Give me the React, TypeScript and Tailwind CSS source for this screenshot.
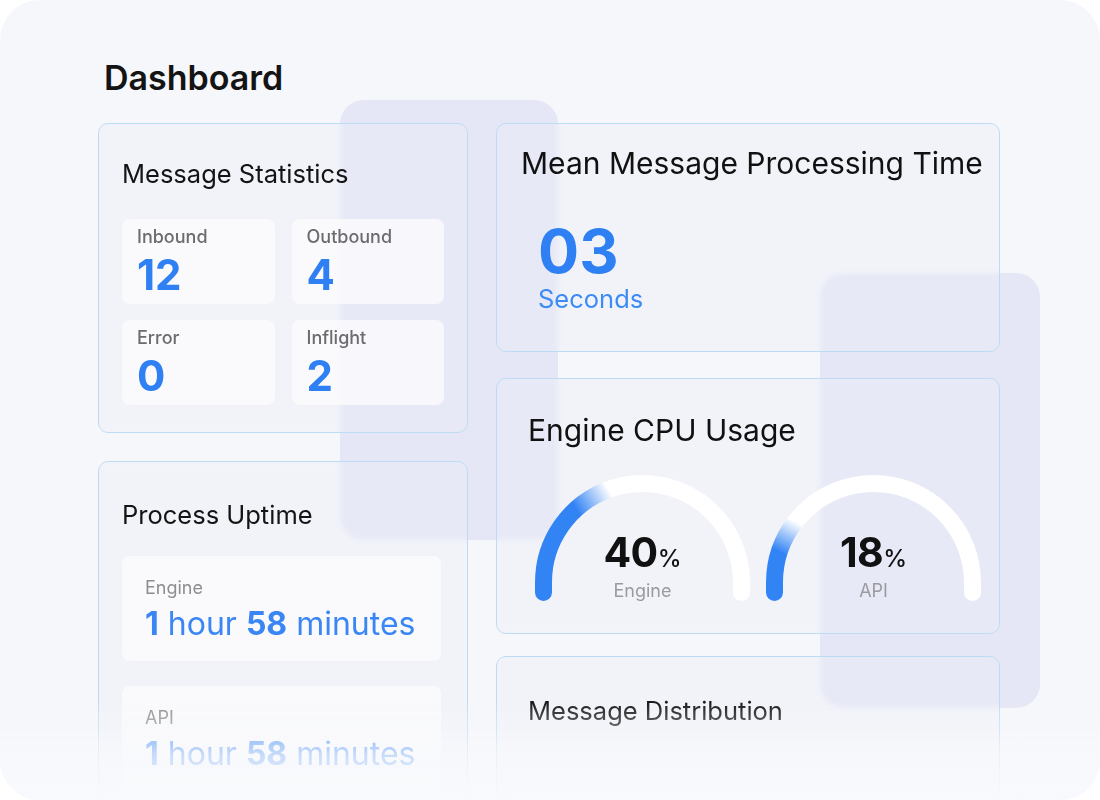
import React from "react";

const cx = 107.5;
const cy = 107.5;
const r = 99;

function pt(deg: number) {
  const a = (deg * Math.PI) / 180;
  return { x: cx + r * Math.cos(a), y: cy - r * Math.sin(a) };
}

function Gauge({
  id,
  end,
  fade,
  value,
  label,
}: {
  id: string;
  end: number;
  fade: number;
  value: string;
  label: string;
}) {
  const e = pt(end);
  const f = pt(fade);
  const track = `M ${cx - r} ${cy + 10} L ${cx - r} ${cy} A ${r} ${r} 0 0 1 ${cx + r} ${cy} L ${cx + r} ${cy + 10}`;
  const fill = `M ${cx - r} ${cy + 10} L ${cx - r} ${cy} A ${r} ${r} 0 0 1 ${e.x} ${e.y}`;
  return (
    <div className="relative w-[215px] h-[127px]">
      <svg width="215" height="127" viewBox="0 0 215 127">
        <defs>
          <linearGradient id={id} gradientUnits="userSpaceOnUse" x1={f.x} y1={f.y} x2={e.x} y2={e.y}>
            <stop offset="0" stopColor="#3283f4" stopOpacity="1" />
            <stop offset="1" stopColor="#3283f4" stopOpacity="0" />
          </linearGradient>
        </defs>
        <path d={track} fill="none" stroke="#ffffff" strokeWidth="17" strokeLinecap="round" />
        <path d={fill} fill="none" stroke={`url(#${id})`} strokeWidth="17" strokeLinecap="round" />
      </svg>
      <div className="absolute inset-x-0 top-[57px] flex flex-col items-center">
        <div className="leading-[40px] text-[#111]">
          <span className="text-[41px] font-bold tracking-[-0.5px]">{value}</span>
          <span className="text-[24px] font-medium">%</span>
        </div>
        <div className="text-[18px] leading-[20px] text-[#9a9a9f]">{label}</div>
      </div>
    </div>
  );
}

function Card({ className, children }: { className?: string; children: React.ReactNode }) {
  return (
    <div
      className={
        "rounded-[10px] border-[1.5px] border-[#bddcf3] bg-[#eceef7]/40 backdrop-blur-[2px] " +
        (className ?? "")
      }
    >
      {children}
    </div>
  );
}

function Stat({ label, value }: { label: string; value: string }) {
  return (
    <div className="h-[85px] rounded-[8px] bg-[#fafafc]/85 px-[15px] pt-[8px]">
      <div className="text-[18px] leading-[20px] font-medium text-[#6b6b70]">{label}</div>
      <div className="mt-[8px] text-[42px] leading-[40px] font-bold text-[#2f80f2]">{value}</div>
    </div>
  );
}

function Uptime({ label }: { label: string }) {
  return (
    <div className="h-[105px] rounded-[8px] bg-[#fafafc]/85 px-[23px] pt-[21px]">
      <div className="text-[18px] leading-[22px] text-[#8d8d92]">{label}</div>
      <div className="mt-[6px] text-[32px] leading-[38px] text-[#3a86f5]">
        <span className="font-bold">1</span> hour <span className="font-bold">58</span> minutes
      </div>
    </div>
  );
}

export default function App() {
  return (
    <div className="w-[1100px] h-[800px] bg-white font-['Inter',sans-serif]">
      <div className="relative w-full h-full rounded-[40px] bg-[#f6f7fb] overflow-hidden">
        <div className="absolute left-[340px] top-[100px] w-[218px] h-[440px] rounded-[24px] bg-[#e6e7f6]" />
        <div className="absolute left-[820px] top-[273px] w-[220px] h-[435px] rounded-[24px] bg-[#e6e7f6]" />

        <div className="relative pl-[98px] pt-[58px]">
          <h1 className="ml-[6px] text-[34px] leading-[40px] font-semibold text-[#141414]">Dashboard</h1>
          <div className="mt-[25px] flex gap-[28px]">
            <div className="w-[370px] flex flex-col gap-[28px]">
              <Card className="h-[310px] px-[23px] pt-[34px]">
                <h2 className="text-[25.5px] leading-[32px] text-[#141414]">Message Statistics</h2>
                <div className="mt-[29px] grid grid-cols-2 gap-x-[17px] gap-y-[16px]">
                  <Stat label="Inbound" value="12" />
                  <Stat label="Outbound" value="4" />
                  <Stat label="Error" value="0" />
                  <Stat label="Inflight" value="2" />
                </div>
              </Card>
              <Card className="h-[400px] pl-[23px] pr-[26px] pt-[37px]">
                <h2 className="text-[25.5px] leading-[32px] text-[#141414]">Process Uptime</h2>
                <div className="mt-[25px] flex flex-col gap-[25px]">
                  <Uptime label="Engine" />
                  <Uptime label="API" />
                </div>
              </Card>
            </div>

            <div className="w-[504px] flex flex-col">
              <Card className="h-[229px] pl-[24px] pt-[21px]">
                <h2 className="text-[30px] leading-[36px] text-[#111]">Mean Message Processing Time</h2>
                <div className="ml-[17px] mt-[40px] text-[61px] leading-[61px] font-bold text-[#2f80f2]">03</div>
                <div className="ml-[17px] mt-[2px] text-[25.5px] leading-[30px] text-[#3d8cf6]">Seconds</div>
              </Card>
              <Card className="mt-[26px] h-[256px] pl-[31px] pt-[33px]">
                <h2 className="text-[30px] leading-[36px] text-[#111]">Engine CPU Usage</h2>
                <div className="mt-[27px] ml-[7px] flex gap-[16px]">
                  <Gauge id="g1" end={110} fade={132} value="40" label="Engine" />
                  <Gauge id="g2" end={142} fade={162} value="18" label="API" />
                </div>
              </Card>
              <Card className="mt-[22px] h-[220px] pl-[31px] pt-[38px]">
                <h2 className="text-[25.5px] leading-[32px] text-[#141414]">Message Distribution</h2>
              </Card>
            </div>
          </div>
        </div>

        <div className="absolute inset-x-0 bottom-0 h-[100px] bg-gradient-to-b from-[#f8f9fc]/0 via-[#f8f9fc]/75 via-55% to-[#f8f9fc]" />
      </div>
    </div>
  );
}
